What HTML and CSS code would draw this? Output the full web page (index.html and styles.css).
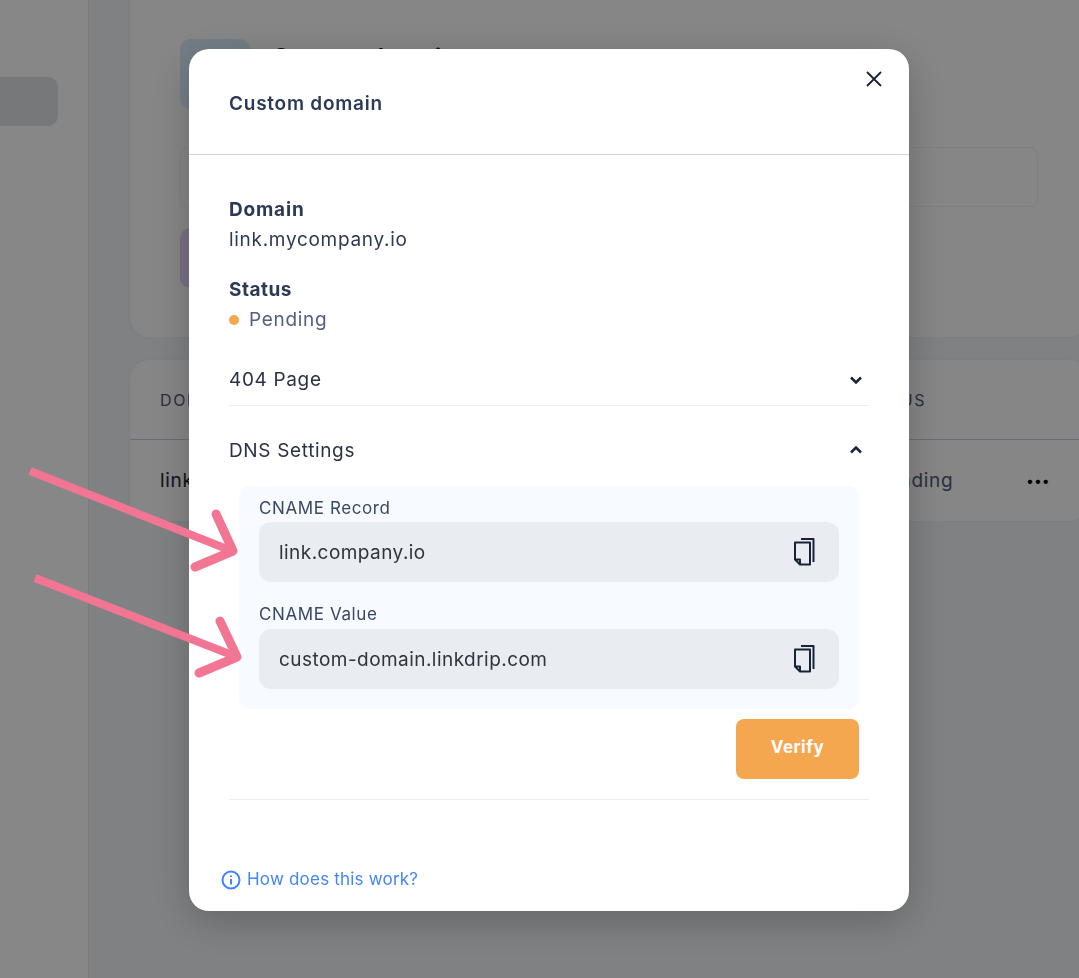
FILE: index.html
```html
<!DOCTYPE html>
<html lang="en">
<head>
    <meta charset="UTF-8">
    <meta name="viewport" content="width=device-width, initial-scale=1.0">
    <title>Custom domain</title>
    <link rel="stylesheet" href="styles.css">
</head>
<body>
    <div class="page">
        <div class="sidebar">
            <div class="side-item"></div>
        </div>
        <div class="main">
            <div class="card top-card">
                <div class="top-head">
                    <div class="tile"></div>
                    <h3>Custom domain</h3>
                </div>
                <div class="fake-input"></div>
                <div class="tile tile-purple"></div>
            </div>
            <div class="card table-card">
                <div class="table-row table-head">
                    <span>Domain</span>
                    <span class="col-status">Status</span>
                    <span></span>
                </div>
                <div class="table-row">
                    <span>link.mycompany.io</span>
                    <span class="col-status col-pending">Pending</span>
                    <span class="dots">•••</span>
                </div>
            </div>
        </div>
    </div>

    <div class="overlay"></div>

    <div class="modal">
        <div class="modal-header">
            <h2>Custom domain</h2>
            <svg class="close" width="18" height="18" viewBox="0 0 18 18"><path d="M2 2l14 14M16 2L2 16" /></svg>
        </div>
        <div class="modal-body">
            <div class="info">
                <strong>Domain</strong>
                <span>link.mycompany.io</span>
            </div>
            <div class="info">
                <strong class="status-label">Status</strong>
                <span class="pending"><i class="dot"></i>Pending</span>
            </div>

            <div class="accordion accordion-first">
                <span>404 Page</span>
                <svg class="chevron" width="14" height="10" viewBox="0 0 14 10"><path d="M2 2.500l5 5 5-5" /></svg>
            </div>

            <div class="dns">
                <div class="accordion accordion-open">
                    <span>DNS Settings</span>
                    <svg class="chevron" width="14" height="10" viewBox="0 0 14 10"><path d="M2 7.500l5-5 5 5" /></svg>
                </div>
                <div class="dns-panel">
                    <label>CNAME Record</label>
                    <div class="copy-field">
                        <span>link.company.io</span>
                        <svg class="copy" width="24" height="30" viewBox="0 0 24 30"><path d="M3 5.500h15v22H8l-5-5zM3 22.500h5v5M9 2h12.500v23" /></svg>
                    </div>
                    <label class="label-second">CNAME Value</label>
                    <div class="copy-field">
                        <span>custom-domain.linkdrip.com</span>
                        <svg class="copy" width="24" height="30" viewBox="0 0 24 30"><path d="M3 5.500h15v22H8l-5-5zM3 22.500h5v5M9 2h12.500v23" /></svg>
                    </div>
                </div>
                <div class="dns-actions">
                    <button type="button">Verify</button>
                </div>
            </div>
        </div>
        <a class="help" href="#">
            <svg width="20" height="20" viewBox="0 0 20 20"><circle cx="10" cy="10" r="8.500" /><path d="M10 9v5.500M10 5.500v1.500" /></svg>
            <span>How does this work?</span>
        </a>
    </div>

    <svg class="arrows" width="260" height="240" viewBox="0 0 260 240">
        <path d="M30 31L232 111" />
        <path class="arrow-head" d="M216 74l17 37-38 16" />
        <path d="M35 138L237 217" />
        <path class="arrow-head" d="M220 181l17 36-38 16" />
    </svg>
</body>
</html>
```
FILE: styles.css
```css
* {
    box-sizing: border-box;
}
body {
    font-family: Inter, "Liberation Sans", sans-serif;
    background-color: #fff;
    height: 978px;
    margin: 0;
    overflow: hidden;
}
.page {
    display: flex;
    height: 978px;
}
.sidebar {
    width: 88px;
    padding-top: 77px;
    flex-shrink: 0;
    background: #ffffff;
}
.side-item {
    width: 58px;
    height: 49px;
    background: #dfe2e4;
    border-radius: 0 10px 10px 0;
}
.main {
    flex: 1;
    padding-left: 41px;
    background: #f1f3f7;
    border-left: 1px solid #e6e8ee;
}
.card {
    background: #fdfdfd;
    margin-right: -10px;
}
.top-card {
    height: 337px;
    padding: 39px 51px 0 50px;
    border-radius: 0 0 20px 20px;
    box-shadow: 0 0 4px rgba(0, 0, 0, 0.04);
}
.top-head {
    display: flex;
    gap: 22px;
}
.top-head h3 {
    margin: 4px 0 0;
    font-size: 24px;
    font-weight: 700;
    color: #1a2238;
}
.tile {
    width: 70px;
    height: 70px;
    border-radius: 10px;
    background: linear-gradient(#d8ecfb, #dcefff);
}
.tile-purple {
    height: 60px;
    margin-top: 21px;
    background: #e2d5fb;
}
.fake-input {
    height: 60px;
    margin-top: 38px;
    border: 1px solid #f0f0f0;
    border-radius: 8px;
}
.table-card {
    height: 161px;
    margin-top: 23px;
    border-radius: 20px;
    box-shadow: 0 0 4px rgba(0, 0, 0, 0.04);
}
.table-row {
    display: grid;
    grid-template-columns: 695px 171px 1fr;
    align-items: center;
    height: 81px;
    padding-left: 30px;
    font-size: 19px;
    letter-spacing: 0.700px;
    color: #1f2533;
}
.table-head {
    height: 80px;
    border-bottom: 1px solid #c5cede;
    font-size: 16px;
    letter-spacing: 1.600px;
    text-transform: uppercase;
    color: #4d5a78;
}
.col-pending {
    padding-left: 20px;
    color: #4d5a78;
}
.dots {
    font-size: 14px;
    letter-spacing: 0;
    color: #000;
}
.overlay {
    position: fixed;
    top: 0;
    left: 0;
    right: 0;
    bottom: 0;
    background: rgba(0, 0, 0, 0.47);
}
.modal {
    position: fixed;
    top: 49px;
    left: 189px;
    width: 720px;
    height: 862px;
    display: flex;
    flex-direction: column;
    background: white;
    border-radius: 20px;
    box-shadow: 0 10px 40px rgba(0, 0, 0, 0.22);
    color: #2d3a55;
}
.modal-header {
    height: 106px;
    padding: 43px 40px 0;
    border-bottom: 1px solid #ccd3dd;
    position: relative;
}
.modal-header h2 {
    margin: 0;
    font-size: 19px;
    line-height: 24px;
    font-weight: 600;
    letter-spacing: 0.750px;
}
.close {
    position: absolute;
    top: 21px;
    right: 26px;
    fill: none;
    stroke: #1a2238;
    stroke-width: 1.800;
}
.modal-body {
    flex: 1;
    padding: 42px 40px 0;
}
.info {
    display: flex;
    flex-direction: column;
    gap: 5px;
    font-size: 19px;
    line-height: 25px;
    letter-spacing: 0.700px;
}
.info + .info {
    margin-top: 25px;
}
.info strong {
    font-size: 19px;
    font-weight: 700;
    letter-spacing: 0.800px;
}
.info .status-label {
    letter-spacing: 0.500px;
}
.pending {
    display: flex;
    align-items: center;
    color: #51607f;
}
.dot {
    width: 10px;
    height: 10px;
    margin-right: 10px;
    border-radius: 50%;
    background: #f4a64e;
}
.accordion {
    display: flex;
    justify-content: space-between;
    align-items: center;
    font-size: 19px;
    letter-spacing: 0.650px;
    color: #2a3245;
}
.accordion-first {
    height: 52px;
    margin-top: 22px;
    padding-right: 6px;
    border-bottom: 1px solid #ebedf0;
}
.accordion-open {
    height: 80px;
    padding: 8px 6px 0 0;
}
.chevron {
    fill: none;
    stroke: #1a2238;
    stroke-width: 2.500;
}
.dns {
    border-bottom: 1px solid #ebedf0;
    padding-bottom: 20px;
}
.dns-panel {
    margin: 0 10px;
    padding: 12px 20px 20px;
    background: #f7faff;
    border-radius: 10px;
}
.dns-panel label {
    display: block;
    font-size: 17px;
    line-height: 20px;
    letter-spacing: 0.600px;
    margin-bottom: 4px;
    color: #3a4763;
}
.dns-panel .label-second {
    margin-top: 22px;
    margin-bottom: 5px;
}
.copy-field {
    display: flex;
    justify-content: space-between;
    align-items: center;
    height: 60px;
    padding: 0 23px 0 20px;
    background: #e9ecf1;
    border-radius: 12px;
    font-size: 19px;
    letter-spacing: 0.450px;
    color: #2f343d;
}
.copy {
    fill: none;
    stroke: #1a2238;
    stroke-width: 2;
    stroke-linejoin: round;
}
.dns-actions {
    display: flex;
    justify-content: flex-end;
    padding: 10px 10px 0 0;
}
.dns-actions button {
    width: 123px;
    height: 60px;
    padding-bottom: 6px;
    border: none;
    border-radius: 8px;
    background-color: #f4a74f;
    color: white;
    font-family: inherit;
    font-size: 17px;
    font-weight: 700;
    letter-spacing: 0.500px;
    cursor: pointer;
}
.help {
    display: flex;
    align-items: center;
    gap: 6px;
    margin: 0 0 20px 32px;
    font-size: 17px;
    line-height: 24px;
    letter-spacing: 0.200px;
    color: #4285f4;
    text-decoration: none;
}
.help span {
    margin-top: 1px;
}
.help svg {
    fill: none;
    stroke: #4285f4;
    stroke-width: 2;
    margin-top: 3px;
}
.arrows {
    position: fixed;
    top: 440px;
    left: 0;
    fill: none;
    stroke: #f27594;
    stroke-width: 8;
}
.arrows .arrow-head {
    stroke-width: 9;
    stroke-linecap: round;
    stroke-linejoin: round;
}
```
